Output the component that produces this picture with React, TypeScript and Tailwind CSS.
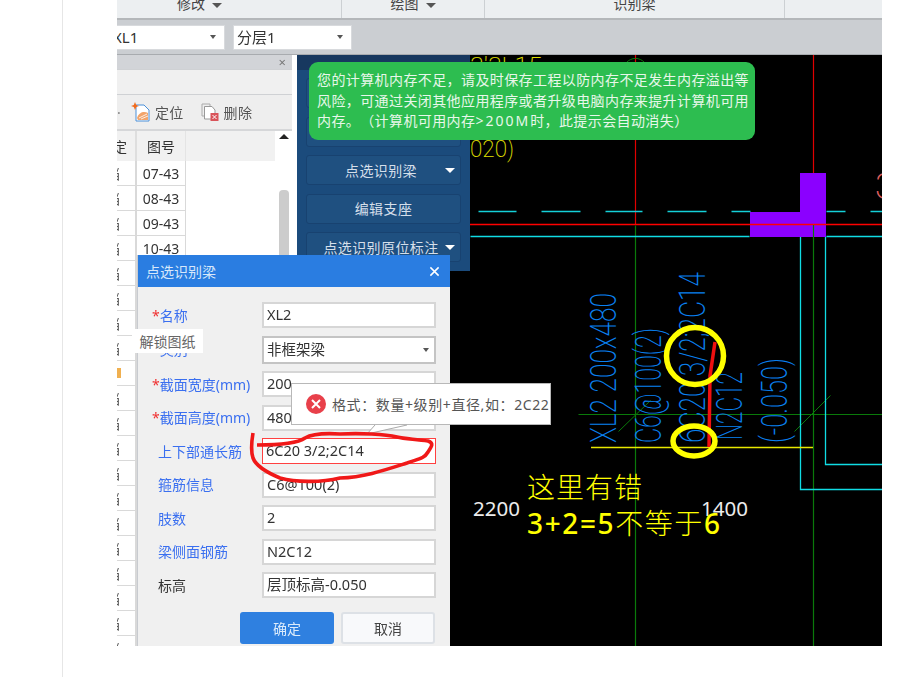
const rowNames = ["07-43", "08-43", "09-43", "10-43", "11-43", "12-43", "13-43", "14-43", "15-43", "16-43", "17-43", "18-43", "19-43", "20-43", "21-43", "22-43", "23-43", "24-43", "25-43", "26-43"];

const fields = [
  { star: true, label: "名称", value: "XL2" },
  { star: true, label: "类别", value: "非框架梁", select: true },
  { star: true, label: "截面宽度(mm)", value: "200" },
  { star: true, label: "截面高度(mm)", value: "480" },
  { star: false, label: "上下部通长筋", value: "6C20 3/2;2C14", error: true },
  { star: false, label: "箍筋信息", value: "C6@100(2)" },
  { star: false, label: "肢数", value: "2" },
  { star: false, label: "梁侧面钢筋", value: "N2C12" },
  { star: false, label: "标高", value: "层顶标高-0.050", dark: true },
];

const Caret = ({ className }: { className: string }) => (
  <span className={`inline-block h-0 w-0 border-x-[5px] border-t-[5px] border-x-transparent ${className}`} />
);

const SmallCaret = () => (
  <span className="inline-block h-0 w-0 border-x-[3.5px] border-t-[4px] border-x-transparent border-t-[#555]" />
);

const PanelButton = ({ label, caret }: { label: string; caret?: boolean }) => (
  <div className="relative flex h-[30px] items-center justify-center rounded-[3px] border border-[#184270] bg-[#1f5080] text-[14px] tracking-[0.4px] text-[#d5dfea]">
    <span className={caret ? "pr-[5px]" : ""}>{label}</span>
    {caret && <Caret className="absolute right-[5px] border-t-white" />}
  </div>
);

const Cad = () => (
  <svg viewBox="470 55 412 591" className="absolute inset-0 h-full w-full">
    <g fill="none" transform="translate(0.5 0.5)">
      <path d="M635 54V224M813 54V224" stroke="#e00000" strokeWidth="1.2" />
      <path d="M635 225V646M813 224V646M578 414H882" stroke="#0a7a0a" strokeWidth="1.2" />
      <path d="M618 431L650 400M794 431L830 395" stroke="#0a7a0a" strokeWidth="1" />
      <path d="M626 62a12 12 0 0 1 18 0" stroke="#0a7a0a" strokeWidth="1" />
      <path d="M478 211H516M541 211H580M605 211H642M667 211H706M731 211H750M826 211H845M870 211H882" stroke="#14d0d8" strokeWidth="1.3" />
      <path d="M470 236H749M826 236H882M800 236V489H882M825 236V464H882" stroke="#10dce4" strokeWidth="1.3" />
    </g>
    <path d="M750 212H800V173H826V237H750Z" fill="#8b00ff" />
    <path d="M470 224.5H882" stroke="#ff0000" strokeWidth="1.4" />
    <path d="M813.5 225V237" stroke="#0a7a0a" strokeWidth="1.2" />
    <path d="M591 447.5H813" stroke="#e8e800" strokeWidth="1.3" />

    <g fontFamily="Roboto, sans-serif" fontWeight="200" fill="#0a80f0" fontSize="36">
      <text transform="translate(616 443) rotate(-90)" textLength="150" lengthAdjust="spacingAndGlyphs">XL2 200x480</text>
      <text transform="translate(661 443) rotate(-90)" textLength="115" lengthAdjust="spacingAndGlyphs">C6@100(2)</text>
      <text transform="translate(705 443) rotate(-90)" textLength="171" lengthAdjust="spacingAndGlyphs">6C20 3/2;2C14</text>
      <text transform="translate(742 440) rotate(-90)" textLength="68" lengthAdjust="spacingAndGlyphs">N2C12</text>
      <text transform="translate(787 443) rotate(-90)" textLength="85" lengthAdjust="spacingAndGlyphs">(-0.050)</text>
    </g>
    <g fontFamily="Roboto, sans-serif" fontWeight="200" fontSize="24">
      <text x="470" y="74" fill="#e0e000" textLength="72" lengthAdjust="spacingAndGlyphs">3'3L15</text>
      <text x="470" y="157" fill="#e0e000" textLength="44" lengthAdjust="spacingAndGlyphs">020)</text>
      <text x="875" y="199" fill="#e06060" fontSize="36">3</text>
    </g>

    <path d="M715 342L710 376L709 447" fill="none" stroke="#f01010" strokeWidth="3.5" />
    <circle cx="695" cy="356" r="28.5" fill="none" stroke="#ffff00" strokeWidth="5.5" />
    <ellipse cx="694" cy="441" rx="21" ry="15" fill="none" stroke="#ffff00" strokeWidth="5.5" />

    <g fontFamily="'Noto Sans', 'Noto Sans CJK SC', sans-serif" fill="#ececec" fontSize="20">
      <text x="473" y="516" textLength="47" lengthAdjust="spacingAndGlyphs">2200</text>
      <text x="701" y="516" textLength="47" lengthAdjust="spacingAndGlyphs">1400</text>
    </g>
    <g fontFamily="'Noto Sans CJK SC', sans-serif" fontWeight="300" fill="#ffff00">
      <text x="527" y="498" fontSize="28" textLength="115">这里有错</text>
      <text x="527" y="534" fontSize="28" textLength="193">
        <tspan fontFamily="'Noto Sans', sans-serif" fontWeight="500">3+2=5</tspan>不等于<tspan fontFamily="'Noto Sans', sans-serif" fontWeight="500">6</tspan>
      </text>
    </g>
  </svg>
);

export default function App() {
  return (
    <div className="flex h-[677px] w-[922px] overflow-hidden bg-white font-['Noto_Sans','Noto_Sans_CJK_SC',sans-serif] [text-spacing-trim:space-all]">
      <div className="h-full w-[63px] border-r border-[#e6e6e6]" />
      <div className="relative ml-[54px] flex h-[646px] w-[765px] flex-col overflow-hidden blur-[0.35px]">
        {/* ribbon */}
        <div className="flex h-[20px] shrink-0 items-end border-b-2 border-[#b4b7ba] bg-[#eceff1] text-[14px] leading-[14px] text-[#444]">
          <div className="flex h-[18px] w-[225px] items-center justify-end gap-[7px] border-r border-[#ccd0d3] pr-[119px]">
            <span className="-mt-[10px]">修改</span>
            <Caret className="-mt-[8px] border-t-[#555]" />
          </div>
          <div className="flex h-[18px] w-[143px] items-center justify-center gap-[7px] border-r border-[#ccd0d3]">
            <span className="-mt-[10px]">绘图</span>
            <Caret className="-mt-[8px] border-t-[#555]" />
          </div>
          <div className="flex h-[18px] w-[300px] items-center justify-center border-r border-[#ccd0d3]">
            <span className="-mt-[10px]">识别梁</span>
          </div>
        </div>

        {/* selects */}
        <div className="flex h-[34px] shrink-0 items-center gap-[8px] bg-[#cbced2] text-[15px] text-[#333]">
          <div className="flex h-[25px] w-[108px] items-center justify-between overflow-hidden border border-l-0 border-[#d8dadd] bg-white pr-[8px]">
            <span className="-ml-[4px]">XL1</span>
            <SmallCaret />
          </div>
          <div className="flex h-[25px] w-[119px] items-center justify-between border border-[#d8dadd] bg-white pl-[3px] pr-[8px]">
            <span>分层1</span>
            <SmallCaret />
          </div>
        </div>

        <div className="flex min-h-0 flex-1 border-t border-[#a8abaf]">
          {/* drawing list */}
          <div className="flex w-[175px] shrink-0 flex-col bg-white">
            <div className="flex h-[14px] shrink-0 items-center justify-end bg-[#d2d4d8] pr-[6px] text-[13px] leading-none text-[#777]">×</div>
            <div className="h-[26px] shrink-0 border-y border-[#cfd1d4] bg-[#f0f0f0]" />
            <div className="flex h-[36px] shrink-0 items-center border-b-2 border-[#d6d7d9] bg-[#eeeeee] text-[14px] tracking-[0.3px] text-[#555]">
              <span className="w-[14px] text-[#888]">·</span>
              <svg viewBox="0 0 20 20" className="h-[20px] w-[20px]">
                <path d="M5 3H13L18 8V19H5Z" fill="#fff" stroke="#4a90d9" strokeWidth="1" />
                <path d="M6 16C8 10 13 9 17 11L17 18H7Z" fill="#f2a46a" />
                <path d="M8 16L16 12M10 17L17 14" stroke="#fff" strokeWidth="0.8" />
                <path d="M4 0L5.2 3L8 4L5.2 5L4 8L2.8 5L0 4L2.8 3Z" fill="#f26a1b" />
              </svg>
              <span className="ml-[4px]">定位</span>
              <svg viewBox="0 0 18 18" className="ml-[17px] h-[18px] w-[18px]">
                <path d="M1 1H9V3M1 1V13H3" fill="none" stroke="#aaa" strokeWidth="1" />
                <path d="M3.5 3.5H11L14 7V16H3.5Z" fill="#fff" stroke="#999" strokeWidth="1" />
                <rect x="9.5" y="10" width="8" height="8" fill="#d9545a" />
                <path d="M11.5 12L15.5 16M15.5 12L11.5 16" stroke="#fff" strokeWidth="1" />
              </svg>
              <span className="ml-[5px]">删除</span>
            </div>

            <div className="flex min-h-0 flex-1">
              <div className="min-w-0 flex-1 overflow-hidden text-[14px] text-[#333]">
                <div className="flex h-[30px] bg-[#f1f1f1]">
                  <div className="flex w-[20px] items-center border-r-2 border-[#dedede] pr-[7px]">
                    <span className="-ml-[4px]">定</span>
                  </div>
                  <div className="flex w-[49px] items-center justify-center border-r border-[#e4e4e4]">图号</div>
                </div>
                {rowNames.map((name, index) => (
                  <div key={name} className="flex h-[25px]">
                    <div className="flex w-[20px] items-center overflow-hidden border-r-2 border-b border-[#d9d9d9] pr-[2px]">
                      {index === 8 ? (
                        <span className="h-[10px] w-[4px] shrink-0 bg-[#f0b050]" />
                      ) : (
                        <span className="-ml-[11px] shrink-0 text-[#555]">档</span>
                      )}
                    </div>
                    <div className="flex w-[49px] items-center justify-center border-r border-b border-[#d9d9d9]">{name}</div>
                  </div>
                ))}
              </div>
              <div className="flex w-[17px] shrink-0 flex-col items-center">
                <span className="mt-[3px] h-0 w-0 border-x-[5px] border-b-[5px] border-x-transparent border-b-[#222]" />
                <div className="mt-[51px] h-[120px] w-[10px] rounded-[4px] bg-[#cccccc]" />
              </div>
            </div>
          </div>

          <div className="w-[5px] shrink-0 bg-white" />

          {/* recognition panel, black canvas carries on below it */}
          <div className="flex w-[173px] shrink-0 flex-col bg-black">
            <div className="h-[216px] shrink-0 bg-[#1b4b7c]">
              <div className="h-[15px] bg-[#17385f]" />
              <div className="flex flex-col gap-[8.5px] px-[9px] pt-[8px]">
                <PanelButton label="" />
                <PanelButton label="" />
                <PanelButton label="点选识别梁" caret />
                <PanelButton label="编辑支座" />
                <PanelButton label="点选识别原位标注" caret />
              </div>
            </div>
          </div>

          {/* cad canvas */}
          <div className="relative min-w-0 flex-1 bg-black">
            <Cad />
          </div>
        </div>

        {/* memory warning */}
        <div className="absolute left-[192px] top-[62px] h-[78px] w-[446px] rounded-[9px] bg-[#2dbd50] py-[8px] pl-[8px] pr-[4px] text-[14px] leading-[20.5px] tracking-[0.4px] text-[#e8f7ea]">
          您的计算机内存不足，请及时保存工程以防内存不足发生内存溢出等风险，可通过关闭其他应用程序或者升级电脑内存来提升计算机可用内存。（计算机可用内存<span className="tracking-[2px]">&gt;200M</span>时，此提示会自动消失）
        </div>

        {/* dialog */}
        <div className="absolute left-[20px] top-[255px] flex h-[400px] w-[313px] flex-col border-l border-[#c8cbd0] bg-[#f0f0f0]">
          <div className="flex h-[32px] shrink-0 items-center justify-between bg-[#2a7de1] pl-[8px] pr-[10px] text-[14px] text-[#d8e8fa]">
            <span>点选识别梁</span>
            <svg viewBox="0 0 12 12" className="h-[11px] w-[11px]">
              <path d="M1.5 1.5L10.5 10.5M10.5 1.5L1.5 10.5" stroke="#fff" strokeWidth="1.6" />
            </svg>
          </div>
          <div className="flex flex-col gap-[7.5px] pl-[14px] pt-[15px]">
            {fields.map((f) => (
              <div key={f.label} className={`flex items-center ${f.select ? "h-[28px]" : "h-[26px]"}`}>
                <div className={`w-[110px] shrink-0 whitespace-nowrap text-[14px] ${f.dark ? "pl-[6px] text-[#333]" : "text-[#3a6ff0]"} ${f.star || f.dark ? "" : "pl-[6px]"}`}>
                  {f.star && <span className="text-[#f03030]">*</span>}
                  {f.label}
                </div>
                <div
                  className={`flex h-full w-[174px] items-center justify-between bg-white pl-[3px] pr-[5px] text-[14.5px] text-[#333] ${
                    f.error ? "border border-[#ff4040]" : f.select ? "border-2 border-[#c4c4c4]" : "border-2 border-[#d6d6d6]"
                  }`}
                >
                  <span>{f.value}</span>
                  {f.select && <SmallCaret />}
                </div>
              </div>
            ))}
          </div>
          <div className="mt-[14px] flex gap-[7px] pl-[102px] text-[14px]">
            <div className="flex h-[32px] w-[94px] items-center justify-center rounded-[3px] bg-[#2f80e0] text-[#dcebfb]">确定</div>
            <div className="flex h-[32px] w-[94px] items-center justify-center rounded-[3px] border-2 border-[#dde1e6] bg-[#f8f9fb] text-[#444]">取消</div>
          </div>
        </div>

        {/* unlock tooltip */}
        <div className="absolute left-[15px] top-[329px] flex h-[24px] w-[71px] items-center justify-center bg-white text-[14px] text-[#666]">解锁图纸</div>

        {/* validation popover */}
        <div className="absolute left-[174px] top-[383px] flex h-[42px] w-[260px] items-center gap-[6px] border border-[#b8b8b8] bg-white pl-[14px] text-[14px] tracking-[0.6px] text-[#555]">
          <svg viewBox="0 0 20 20" className="h-[20px] w-[20px] shrink-0">
            <circle cx="10" cy="10" r="10" fill="#e8404a" />
            <path d="M6 6L14 14M14 6L6 14" stroke="#fff" strokeWidth="2" />
          </svg>
          <span className="whitespace-nowrap">格式：数量+级别+直径,如：2C22</span>
        </div>
        <svg viewBox="0 0 50 12" className="absolute left-[250px] top-[424px] h-[12px] w-[50px]">
          <path d="M8 1L0 10L40 1Z" fill="#fff" />
          <path d="M8 1L0 10L40 1" fill="none" stroke="#aaa" strokeWidth="1" />
        </svg>

        {/* hand drawn ring */}
        <svg viewBox="117 0 765 646" className="pointer-events-none absolute inset-0 h-full w-full">
          <path
            d="M253 433C251 445 251 452 253 458C256 466 268 473 280 478C295 482 320 483 340 478C365 477 385 470 407 463C418 459 424 459 428 452C432 446 434 443 428 441C415 439 405 439 397 437C385 434 360 433 340 434C325 433 312 434 305 438C298 443 280 445 257 445"
            fill="none"
            stroke="#f01818"
            strokeWidth="3.6"
          />
        </svg>
      </div>
    </div>
  );
}
